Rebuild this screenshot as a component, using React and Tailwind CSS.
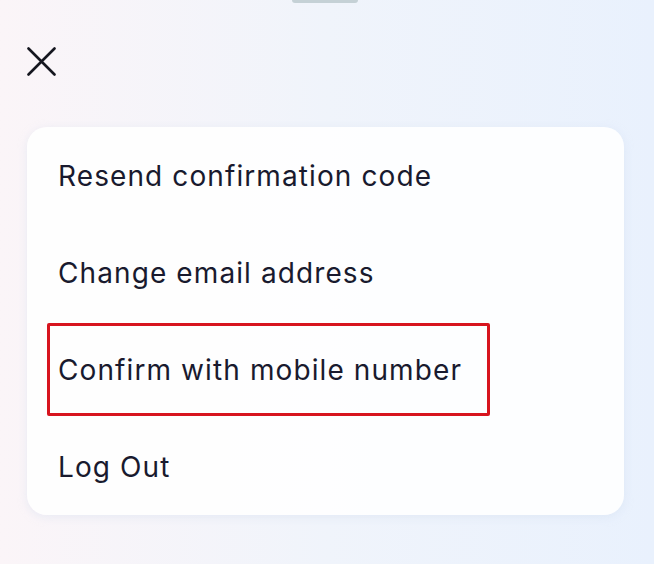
const items = [
    { label: 'Resend confirmation code' },
    { label: 'Change email address' },
    { label: 'Confirm with mobile number', highlight: true },
    { label: 'Log Out' },
];

export default function App() {
    return (
        <div className="relative w-[654px] h-[564px] overflow-hidden bg-gradient-to-r from-[#fbf5f8] via-[#f0f4fb] to-[#e9f1fd] font-['Inter',sans-serif] text-[#191a2e]">
            {/* drag handle */}
            <div className="absolute top-0 left-[292px] w-[66px] h-[3px] rounded-b-full bg-[#c5d1d6]" />

            <div className="pt-[47px] pl-[27px]">
                <button className="block w-[29px] h-[29px]">
                    <svg width="29" height="29" viewBox="0 0 29 29" fill="none" stroke="#15161f" strokeWidth="2.6" strokeLinecap="round">
                        <path d="M1.5 1.5 27.5 27.5M27.5 1.5 1.5 27.5" />
                    </svg>
                </button>
            </div>

            <div className="mt-[51px] mx-[27px] w-[597px] rounded-[20px] bg-white/90 shadow-[0_2px_10px_rgba(200,215,235,0.35)]">
                {items.map((item) => (
                    <div key={item.label} className="h-[97px] flex items-center">
                        {item.highlight ? (
                            <div className="ml-[20px] w-[443px] h-[93px] border-[3px] border-[#d7141e] rounded-[2px] flex items-center pl-[8px]">
                                <span className="text-[28px] leading-none tracking-[1.1px]">{item.label}</span>
                            </div>
                        ) : (
                            <span className="pl-[31px] text-[28px] leading-none tracking-[1.1px]">{item.label}</span>
                        )}
                    </div>
                ))}
            </div>
        </div>
    );
}
